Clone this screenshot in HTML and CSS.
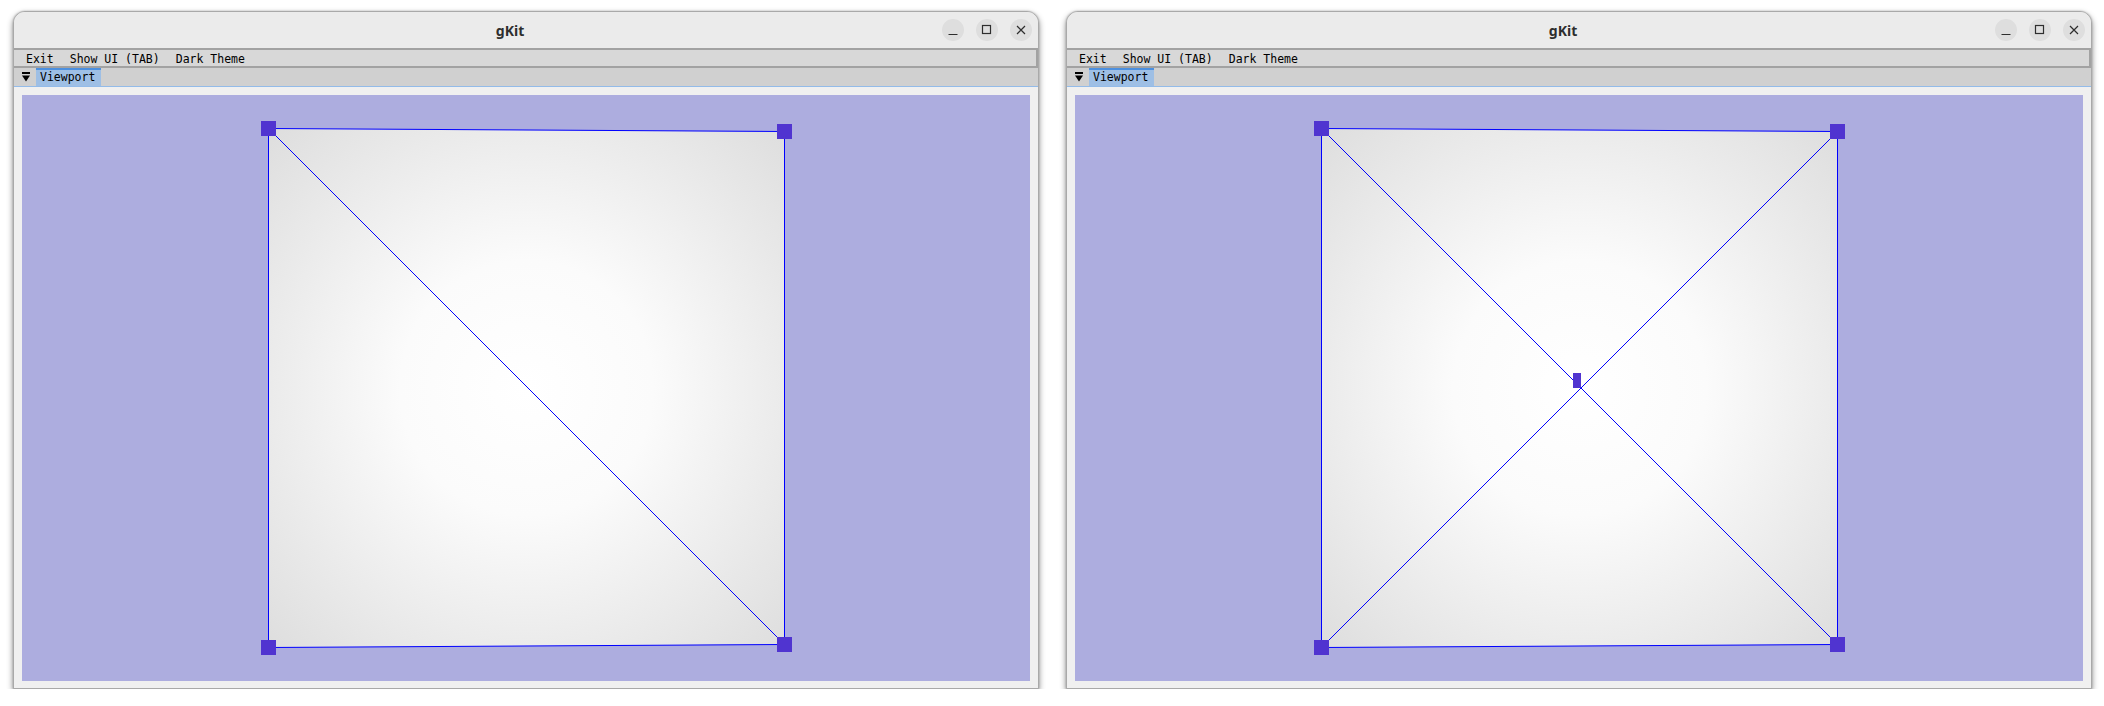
FILE: index.html
```html
<!DOCTYPE html>
<html>
<head>
<meta charset="utf-8">
<link rel="stylesheet" href="styles.css">
</head>
<body>
<div class="desktop">
  <div class="window">
    <div class="titlebar">
      <div class="spacer"></div>
      <div class="title">gKit</div>
      <div class="controls">
        <div class="ctl"><svg width="22" height="22" viewBox="0 0 22 22"><path d="M6.5 15.5h9" stroke="#2e2e2e" stroke-width="1.2"/></svg></div>
        <div class="ctl"><svg width="22" height="22" viewBox="0 0 22 22"><rect x="6.5" y="6.5" width="8" height="8" fill="none" stroke="#2e2e2e" stroke-width="1.2"/></svg></div>
        <div class="ctl"><svg width="22" height="22" viewBox="0 0 22 22"><path d="M7 7l8 8M15 7l-8 8" stroke="#2e2e2e" stroke-width="1.2"/></svg></div>
      </div>
    </div>
    <div class="menubar">
      <span class="menu-item">Exit</span>
      <span class="menu-item">Show UI (TAB)</span>
      <span class="menu-item">Dark Theme</span>
    </div>
    <div class="tabbar">
      <svg class="tab-arrow" width="8" height="10" viewBox="0 0 8 10"><rect x="0" y="0" width="8" height="2" fill="#000"/><path d="M0 3.5h8L4 9.5z" fill="#000"/></svg>
      <div class="tab">Viewport</div>
    </div>
    <div class="content">
      <div class="viewport">
        <svg class="scene" width="1008" height="586" viewBox="0 0 1008 586">
          <defs>
            <radialGradient id="g1" cx="0.5" cy="0.5" r="0.7">
              <stop offset="0" stop-color="#ffffff"/>
              <stop offset="0.35" stop-color="#fbfbfb"/>
              <stop offset="1" stop-color="#dedede"/>
            </radialGradient>
          </defs>
          <polygon points="246.5,33.5 762.5,36.5 762.5,549.5 246.5,552.5" fill="url(#g1)" stroke="#0000ff" stroke-width="1"/>
          <line x1="246.5" y1="33.5" x2="762.5" y2="549.5" stroke="#0000ff" stroke-width="1"/>
          <rect class="handle" x="239" y="26" width="15" height="15"/>
          <rect class="handle" x="755" y="29" width="15" height="15"/>
          <rect class="handle" x="755" y="542" width="15" height="15"/>
          <rect class="handle" x="239" y="545" width="15" height="15"/>
        </svg>
      </div>
    </div>
  </div>

  <div class="window">
    <div class="titlebar">
      <div class="spacer"></div>
      <div class="title">gKit</div>
      <div class="controls">
        <div class="ctl"><svg width="22" height="22" viewBox="0 0 22 22"><path d="M6.5 15.5h9" stroke="#2e2e2e" stroke-width="1.2"/></svg></div>
        <div class="ctl"><svg width="22" height="22" viewBox="0 0 22 22"><rect x="6.5" y="6.5" width="8" height="8" fill="none" stroke="#2e2e2e" stroke-width="1.2"/></svg></div>
        <div class="ctl"><svg width="22" height="22" viewBox="0 0 22 22"><path d="M7 7l8 8M15 7l-8 8" stroke="#2e2e2e" stroke-width="1.2"/></svg></div>
      </div>
    </div>
    <div class="menubar">
      <span class="menu-item">Exit</span>
      <span class="menu-item">Show UI (TAB)</span>
      <span class="menu-item">Dark Theme</span>
    </div>
    <div class="tabbar">
      <svg class="tab-arrow" width="8" height="10" viewBox="0 0 8 10"><rect x="0" y="0" width="8" height="2" fill="#000"/><path d="M0 3.5h8L4 9.5z" fill="#000"/></svg>
      <div class="tab">Viewport</div>
    </div>
    <div class="content">
      <div class="viewport">
        <svg class="scene" width="1008" height="586" viewBox="0 0 1008 586">
          <defs>
            <radialGradient id="g2" cx="0.5" cy="0.5" r="0.7">
              <stop offset="0" stop-color="#ffffff"/>
              <stop offset="0.35" stop-color="#fbfbfb"/>
              <stop offset="1" stop-color="#dedede"/>
            </radialGradient>
          </defs>
          <polygon points="246.5,33.5 762.5,36.5 762.5,549.5 246.5,552.5" fill="url(#g2)" stroke="#0000ff" stroke-width="1"/>
          <line x1="246.5" y1="33.5" x2="762.5" y2="549.5" stroke="#0000ff" stroke-width="1"/>
          <line x1="762.5" y1="36.5" x2="246.5" y2="552.5" stroke="#0000ff" stroke-width="1"/>
          <rect class="handle" x="239" y="26" width="15" height="15"/>
          <rect class="handle" x="755" y="29" width="15" height="15"/>
          <rect class="handle" x="755" y="542" width="15" height="15"/>
          <rect class="handle" x="239" y="545" width="15" height="15"/>
          <rect class="handle" x="498" y="278" width="8" height="15"/>
        </svg>
      </div>
    </div>
  </div>
</div>
</body>
</html>
```

FILE: styles.css
```css
html, body {
  margin: 0;
  padding: 0;
  background: #ffffff;
}

.desktop {
  display: flex;
  gap: 27px;
  padding: 11px 0 0 13px;
}

.window {
  width: 1026px;
  height: 678px;
  box-sizing: border-box;
  border: 1px solid #a9a9a9;
  border-radius: 12px 12px 0 0;
  background: #f0f0f0;
  display: flex;
  flex-direction: column;
  overflow: hidden;
  box-shadow: 0 3px 6px rgba(0, 0, 0, 0.45), 0 0 2px rgba(0, 0, 0, 0.25);
}

.titlebar {
  height: 36px;
  flex: none;
  background: #ebebeb;
  display: grid;
  grid-template-columns: 1fr auto 1fr;
  align-items: center;
}

.title {
  font-family: "Noto Sans", "DejaVu Sans", sans-serif;
  font-weight: 700;
  font-size: 14px;
  color: #2e2e2e;
  padding-right: 32px;
}

.controls {
  justify-self: end;
  display: flex;
  gap: 12px;
  margin-right: 6px;
}

.ctl {
  width: 22px;
  height: 22px;
  border-radius: 50%;
  background: #dedede;
}

.ctl svg {
  display: block;
}

.menubar {
  height: 16px;
  flex: none;
  background: #d8d8d8;
  border-top: 2px solid #a2a2a2;
  border-bottom: 2px solid #a2a2a2;
  border-right: 2px solid #a2a2a2;
  display: flex;
  align-items: center;
  padding-left: 12px;
  font-family: "DejaVu Sans Mono", monospace;
  font-size: 11.5px;
  color: #000;
}

.menu-item {
  margin-right: 16px;
  line-height: 16px;
  padding-top: 1px;
}

.tabbar {
  height: 18px;
  flex: none;
  background: #d0d0d0;
  border-bottom: 1px solid #93bbe9;
  display: flex;
  align-items: stretch;
}

.tab-arrow {
  margin: 4px 0 0 8px;
}

.tab {
  margin-left: 6px;
  width: 61px;
  padding-left: 4px;
  background: #9ebfe5;
  border-top: 2px solid #4c90e0;
  font-family: "DejaVu Sans Mono", monospace;
  font-size: 11.5px;
  line-height: 15px;
  color: #000;
}

.content {
  flex: 1;
  padding: 8px;
  background: #f0f0f0;
  display: flex;
}

.viewport {
  flex: 1;
  background: #adaddf;
  overflow: hidden;
}

.scene {
  display: block;
}

.handle {
  fill: #5034d0;
}
```
